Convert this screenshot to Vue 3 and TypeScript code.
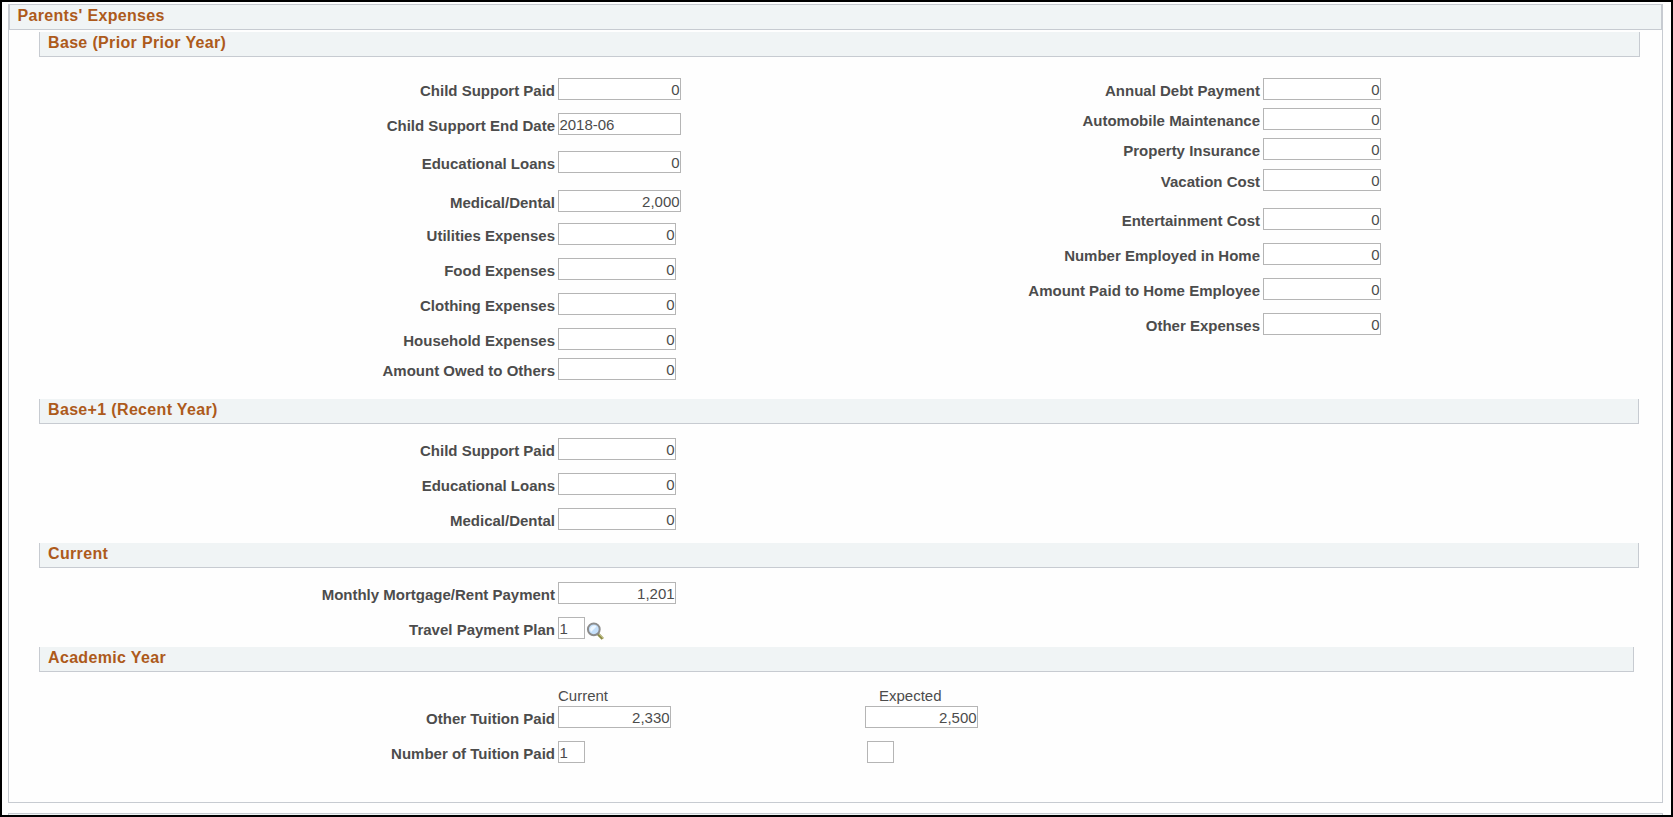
<script setup lang="ts">
interface Field {
  label: string
  value: string
  gap: number
  size: 'wide' | 'medium' | 'short' | 'tiny'
  align?: 'left'
  lookup?: boolean
  expected?: string
}

const basePrimary: Field[] = [
  { label: 'Child Support Paid', value: '0', gap: 0, size: 'wide' },
  { label: 'Child Support End Date', value: '2018-06', gap: 13, size: 'wide', align: 'left' },
  { label: 'Educational Loans', value: '0', gap: 16, size: 'wide' },
  { label: 'Medical/Dental', value: '2,000', gap: 17, size: 'wide' },
  { label: 'Utilities Expenses', value: '0', gap: 11, size: 'medium' },
  { label: 'Food Expenses', value: '0', gap: 13, size: 'medium' },
  { label: 'Clothing Expenses', value: '0', gap: 13, size: 'medium' },
  { label: 'Household Expenses', value: '0', gap: 13, size: 'medium' },
  { label: 'Amount Owed to Others', value: '0', gap: 8, size: 'medium' },
]

const baseSecondary: Field[] = [
  { label: 'Annual Debt Payment', value: '0', gap: 0, size: 'medium' },
  { label: 'Automobile Maintenance', value: '0', gap: 8, size: 'medium' },
  { label: 'Property Insurance', value: '0', gap: 8, size: 'medium' },
  { label: 'Vacation Cost', value: '0', gap: 9, size: 'medium' },
  { label: 'Entertainment Cost', value: '0', gap: 17, size: 'medium' },
  { label: 'Number Employed in Home', value: '0', gap: 13, size: 'medium' },
  { label: 'Amount Paid to Home Employee', value: '0', gap: 13, size: 'medium' },
  { label: 'Other Expenses', value: '0', gap: 13, size: 'medium' },
]

const recent: Field[] = [
  { label: 'Child Support Paid', value: '0', gap: 0, size: 'medium' },
  { label: 'Educational Loans', value: '0', gap: 13, size: 'medium' },
  { label: 'Medical/Dental', value: '0', gap: 13, size: 'medium' },
]

const current: Field[] = [
  { label: 'Monthly Mortgage/Rent Payment', value: '1,201', gap: 0, size: 'medium' },
  { label: 'Travel Payment Plan', value: '1', gap: 13, size: 'tiny', align: 'left', lookup: true },
]

const academic: Field[] = [
  { label: 'Other Tuition Paid', value: '2,330', gap: 0, size: 'short', expected: '2,500' },
  { label: 'Number of Tuition Paid', value: '1', gap: 13, size: 'tiny', align: 'left', expected: '' },
]

const sections = [
  { key: 'base', title: 'Base (Prior Prior Year)', columns: [basePrimary, baseSecondary] },
  { key: 'recent', title: 'Base+1 (Recent Year)', columns: [recent] },
  { key: 'current', title: 'Current', columns: [current] },
  { key: 'academic', title: 'Academic Year', columns: [academic] },
]
</script>

<template>
  <div class="frame">
    <main class="panel">
      <h1 class="panel-title">Parents' Expenses</h1>
      <section v-for="s in sections" :key="s.key" class="section" :class="s.key">
        <h2 class="section-title">{{ s.title }}</h2>
        <div v-if="s.key === 'academic'" class="heads">
          <span class="head-current">Current</span>
          <span>Expected</span>
        </div>
        <div class="columns">
          <div v-for="(col, c) in s.columns" :key="c" class="column" :class="{ second: c === 1 }">
            <div v-for="f in col" :key="f.label" class="row" :style="{ marginTop: f.gap + 'px' }">
              <label class="label">{{ f.label }}</label>
              <div class="box" :class="[f.size, f.align]">{{ f.value }}</div>
              <svg v-if="f.lookup" class="lookup" width="19" height="19" viewBox="0 0 19 19">
                <path d="M11.5 11.5l5.2 5.3" stroke="#8b8b45" stroke-width="3" />
                <path d="M12.4 11.5l5 5" stroke="#c7c48a" stroke-width="1" />
                <circle cx="7.8" cy="7.3" r="5.9" fill="#c5e0fb" stroke="#8c8c8c" stroke-width="2" />
                <path d="M4 7.5a4 4 0 0 1 6.5-3L5 10z" fill="#eef7ff" />
              </svg>
              <div v-if="f.expected !== undefined" class="box expected" :class="[f.size, f.align]">{{ f.expected }}</div>
            </div>
          </div>
        </div>
      </section>
    </main>
    <div class="next-panel"></div>
  </div>
</template>

<style>
body {
  margin: 0;
  background: #fff;
}
</style>

<style scoped>
.frame {
  box-sizing: border-box;
  width: 1673px;
  height: 817px;
  border: 2px solid #000;
  padding: 2px 8px 0 6px;
  overflow: hidden;
  background: #fefefe;
  font-family: "Liberation Sans", Arial, sans-serif;
  color: #4c4c4c;
}
.panel {
  box-sizing: border-box;
  width: 1655px;
  height: 799px;
  border: 1px solid #c7cbd1;
  border-top: 0;
}
.panel-title,
.section-title {
  box-sizing: border-box;
  margin: 0;
  border: 1px solid #c7cbd1;
  background: #f0f4f5;
  color: #ad5a1b;
  font-size: 16px;
  font-weight: bold;
  white-space: nowrap;
}
.panel-title {
  height: 26px;
  padding-left: 7.5px;
  line-height: 21px;
  letter-spacing: 0.33px;
}
.section {
  box-sizing: border-box;
  margin-left: 30px;
}
.section-title {
  height: 25px;
  border-top: 0;
  padding-left: 8px;
  line-height: 21px;
  letter-spacing: 0.34px;
}
.base {
  height: 367px;
  margin-top: 2px;
  width: 1601px;
}
.recent {
  height: 144px;
  width: 1600px;
}
.current {
  height: 104px;
  width: 1600px;
}
.academic {
  width: 1595px;
}
.columns {
  display: flex;
}
.base .columns {
  padding-top: 21px;
}
.recent .columns,
.current .columns {
  padding-top: 14px;
}
.column {
  flex: none;
  width: 642px;
}
.column.second {
  width: 700px;
}
.academic .column {
  width: 1000px;
}
.row {
  display: flex;
  height: 22px;
}
.label {
  flex: none;
  width: 516px;
  margin-right: 3px;
  text-align: right;
  font-size: 15px;
  font-weight: bold;
  line-height: 26px;
  white-space: nowrap;
}
.second .label {
  width: 579px;
}
.box {
  box-sizing: border-box;
  flex: none;
  height: 22px;
  border: 1px solid #b5b5b5;
  background: #fff;
  padding: 0 0.4px;
  font-size: 15px;
  line-height: 22px;
  text-align: right;
}
.wide { width: 123px; }
.medium { width: 118px; }
.short { width: 113px; }
.tiny { width: 27px; }
.left { text-align: left; }
.short.expected { margin-left: 194px; }
.tiny.expected { margin-left: 282px; }
.lookup {
  flex: none;
  margin: 5px 0 0 1px;
}
.heads {
  display: flex;
  height: 34px;
  box-sizing: border-box;
  padding: 15px 0 0 519px;
  font-size: 15px;
  line-height: 17px;
}
.head-current {
  width: 321px;
}
.next-panel {
  box-sizing: border-box;
  width: 1655px;
  height: 20px;
  margin-top: 10px;
  border: 1px solid #c7cbd1;
  background: #f0f4f5;
}
</style>
